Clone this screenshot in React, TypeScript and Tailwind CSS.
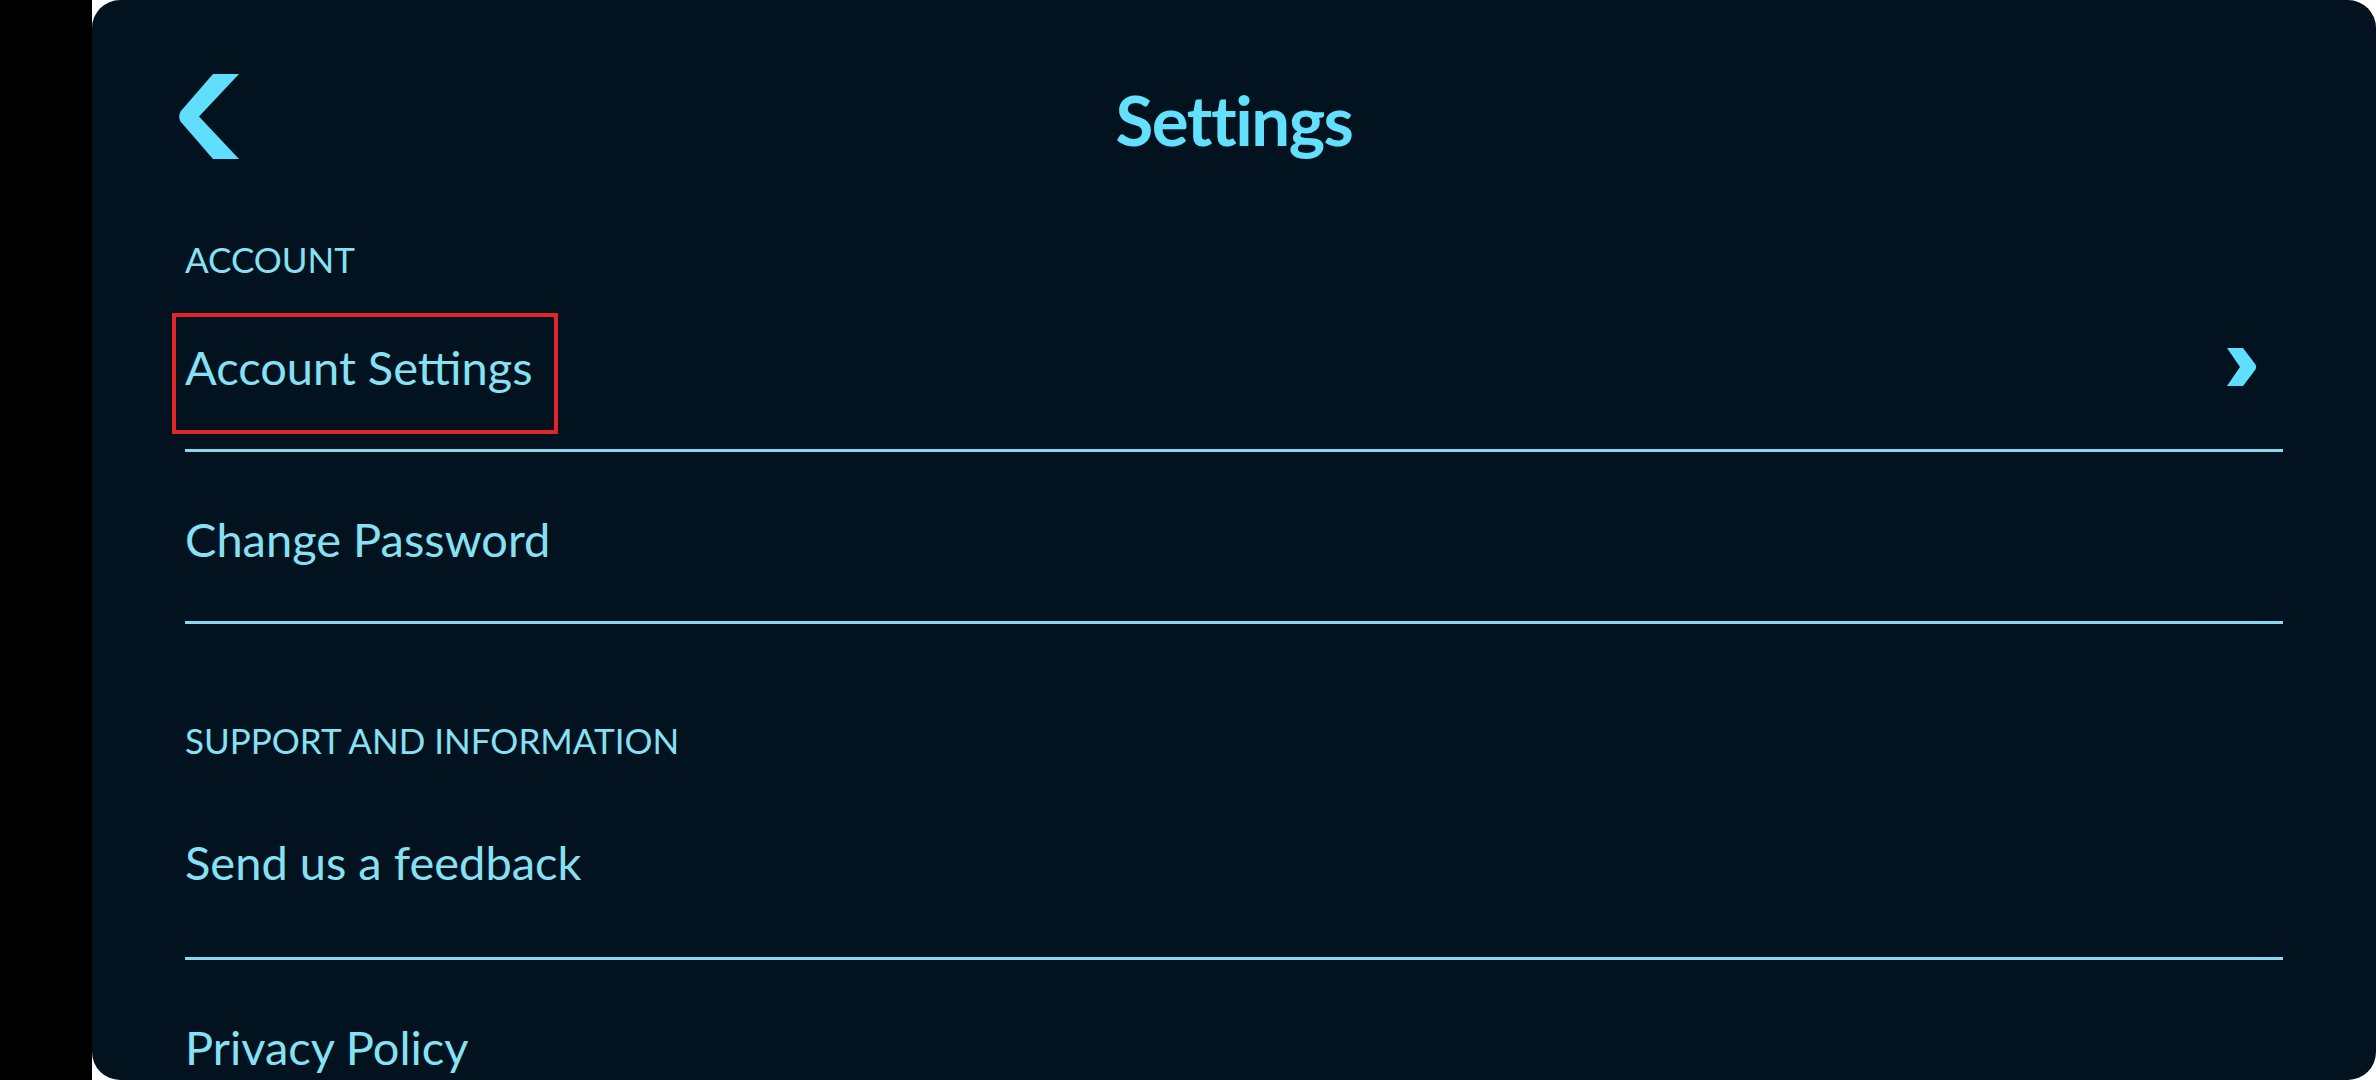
import React from "react";

const items = [
  { section: "ACCOUNT" },
  { label: "Account Settings", chevron: true, marked: true },
  { label: "Change Password" },
  { section: "SUPPORT AND INFORMATION" },
  { label: "Send us a feedback", tall: true },
  { label: "Privacy Policy" },
];

function BackChevron() {
  return (
    <svg viewBox="0 0 61 85" className="w-[61px] h-[85px]">
      <path d="M35 0 H61 L21 42.5 L61 85 H35 L2.5 47.5 Q0 42.5 2.5 37.5 Z" fill="#5fdffd" />
    </svg>
  );
}

function RowChevron() {
  return (
    <svg viewBox="0 0 30 38" className="w-[30px] h-[38px]">
      <path d="M0 0 H16 L28.5 16.5 Q30 19 28.5 21.5 L16 38 H0 L13 19 Z" fill="#5fdffd" />
    </svg>
  );
}

export default function App() {
  return (
    <div className="w-[2376px] h-[1080px] bg-white flex overflow-hidden" style={{ fontFamily: "Lato, 'Noto Sans', sans-serif" }}>
      {/* left system strip */}
      <div className="w-[92px] h-full bg-black shrink-0" />

      <div className="flex-1 h-full bg-[#02121f] rounded-[28px] overflow-hidden flex flex-col">
        {/* Header */}
        <div className="h-[200px] shrink-0 px-[86px] grid grid-cols-[1fr_auto_1fr] items-start">
          <button className="mt-[74px] justify-self-start">
            <BackChevron />
          </button>
          <h1 className="mt-[79px] text-[69px] leading-[1.2] font-bold tracking-[-1.5px] text-[#62e0fd]">Settings</h1>
          <div />
        </div>

        {/* List */}
        <div className="px-[93px] flex flex-col">
          {items.map((it, i) =>
            it.section ? (
              <div
                key={i}
                className={`${i === 0 ? "pt-[38px]" : "pt-[95px]"} text-[35px] leading-[42px] text-[#86e1f4]`}
              >
                {it.section}
              </div>
            ) : (
              <div
                key={i}
                className={`relative flex items-center justify-between border-b-[3px] border-[#88d9ee] shrink-0 ${
                  it.tall ? "h-[199px] pt-[6px]" : "h-[172px] pt-[4px]"
                }`}
              >
                <span className="text-[47px] leading-[56px] text-[#86e1f4]">{it.label}</span>
                {it.chevron && (
                  <span className="mr-[26px] flex">
                    <RowChevron />
                  </span>
                )}
                {it.marked && (
                  <div className="absolute left-[-13px] top-[33px] w-[386px] h-[121px] border-4 border-[#e2242b]" />
                )}
              </div>
            )
          )}
        </div>
      </div>
    </div>
  );
}
